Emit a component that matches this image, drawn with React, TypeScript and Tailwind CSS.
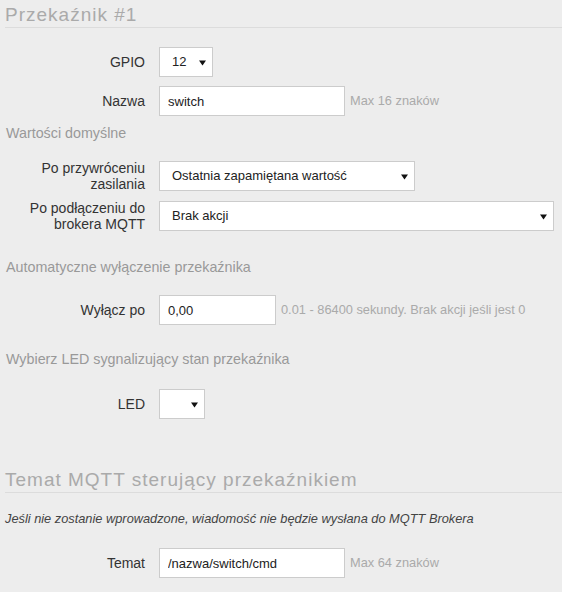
import React from "react";

// Relay settings form (Pure-CSS aligned form look)

interface RowProps {
  label: React.ReactNode;
  hint?: string;
  className?: string;
  children: React.ReactNode;
}

const Row: React.FC<RowProps> = ({ label, hint, className, children }) => (
  <div className={`flex h-[30px] items-center ${className ?? ""}`}>
    <label className="mr-[14px] w-[140px] shrink-0 text-right text-[14px] leading-[16px] text-[#333]">
      {label}
    </label>
    {children}
    {hint && (
      <span className="ml-[5px] text-[12.8px] text-[#aaa]">{hint}</span>
    )}
  </div>
);

const Arrow = () => (
  <svg width="7" height="7" viewBox="0 0 7 7" className="shrink-0">
    <path d="M0 1.5h7L3.5 6.5z" fill="#111" />
  </svg>
);

const FakeSelect: React.FC<{ value: string; width: string }> = ({
  value,
  width,
}) => (
  <div
    className={`flex h-[30px] items-center justify-between border border-[#ccc] bg-white pl-[12px] pr-[6px] text-[13px] text-[#222] ${width}`}
  >
    <span>{value}</span>
    <Arrow />
  </div>
);

const TextInput: React.FC<{ value: string; width: string }> = ({
  value,
  width,
}) => (
  <input
    type="text"
    defaultValue={value}
    className={`h-[30px] border border-[#ccc] bg-white px-[8px] text-[13px] text-[#222] outline-none ${width}`}
  />
);

export default function App() {
  return (
    <div
      className="min-h-[592px] w-[562px] bg-[#ededed] pl-[5px]"
      style={{ fontFamily: '"Liberation Sans", Arial, sans-serif' }}
    >
      <div className="border-b border-[#dcdcdc] pt-[3px] text-[19px] leading-[24px] tracking-[1px] text-[#aaa]">
        Przekaźnik #1
      </div>

      <Row label="GPIO" className="mt-[19px]">
        <FakeSelect value="12" width="w-[54px]" />
      </Row>
      <Row label="Nazwa" hint="Max 16 znaków" className="mt-[9px]">
        <TextInput value="switch" width="w-[186px]" />
      </Row>

      <div className="mt-[9px] pl-[1px] text-[14.3px] leading-[16px] text-[#999]">
        Wartości domyślne
      </div>

      <Row
        label={
          <>
            Po przywróceniu
            <br />
            zasilania
          </>
        }
        className="mt-[20px]"
      >
        <FakeSelect value="Ostatnia zapamiętana wartość" width="w-[256px]" />
      </Row>
      <Row
        label={
          <>
            Po podłączeniu do
            <br />
            brokera MQTT
          </>
        }
        className="mt-[10px]"
      >
        <FakeSelect value="Brak akcji" width="w-[395px]" />
      </Row>

      <div className="mt-[28px] pl-[1px] text-[14.3px] leading-[16px] text-[#999]">
        Automatyczne wyłączenie przekaźnika
      </div>

      <Row
        label="Wyłącz po"
        hint="0.01 - 86400 sekundy. Brak akcji jeśli jest 0"
        className="mt-[20px]"
      >
        <TextInput value="0,00" width="w-[117px]" />
      </Row>

      <div className="mt-[26px] pl-[1px] text-[14.3px] leading-[16px] text-[#999]">
        Wybierz LED sygnalizujący stan przekaźnika
      </div>

      <Row label="LED" className="mt-[22px]">
        <FakeSelect value="" width="w-[46px]" />
      </Row>

      <div className="mt-[46px] border-b border-[#dcdcdc] pt-[3px] text-[19px] leading-[24px] tracking-[1px] text-[#aaa]">
        Temat MQTT sterujący przekaźnikiem
      </div>

      <div className="mt-[18px] text-[12.8px] italic leading-[16px] text-[#444]">
        Jeśli nie zostanie wprowadzone, wiadomość nie będzie wysłana do MQTT
        Brokera
      </div>

      <Row label="Temat" hint="Max 64 znaków" className="mt-[21px]">
        <TextInput value="/nazwa/switch/cmd" width="w-[186px]" />
      </Row>
    </div>
  );
}
